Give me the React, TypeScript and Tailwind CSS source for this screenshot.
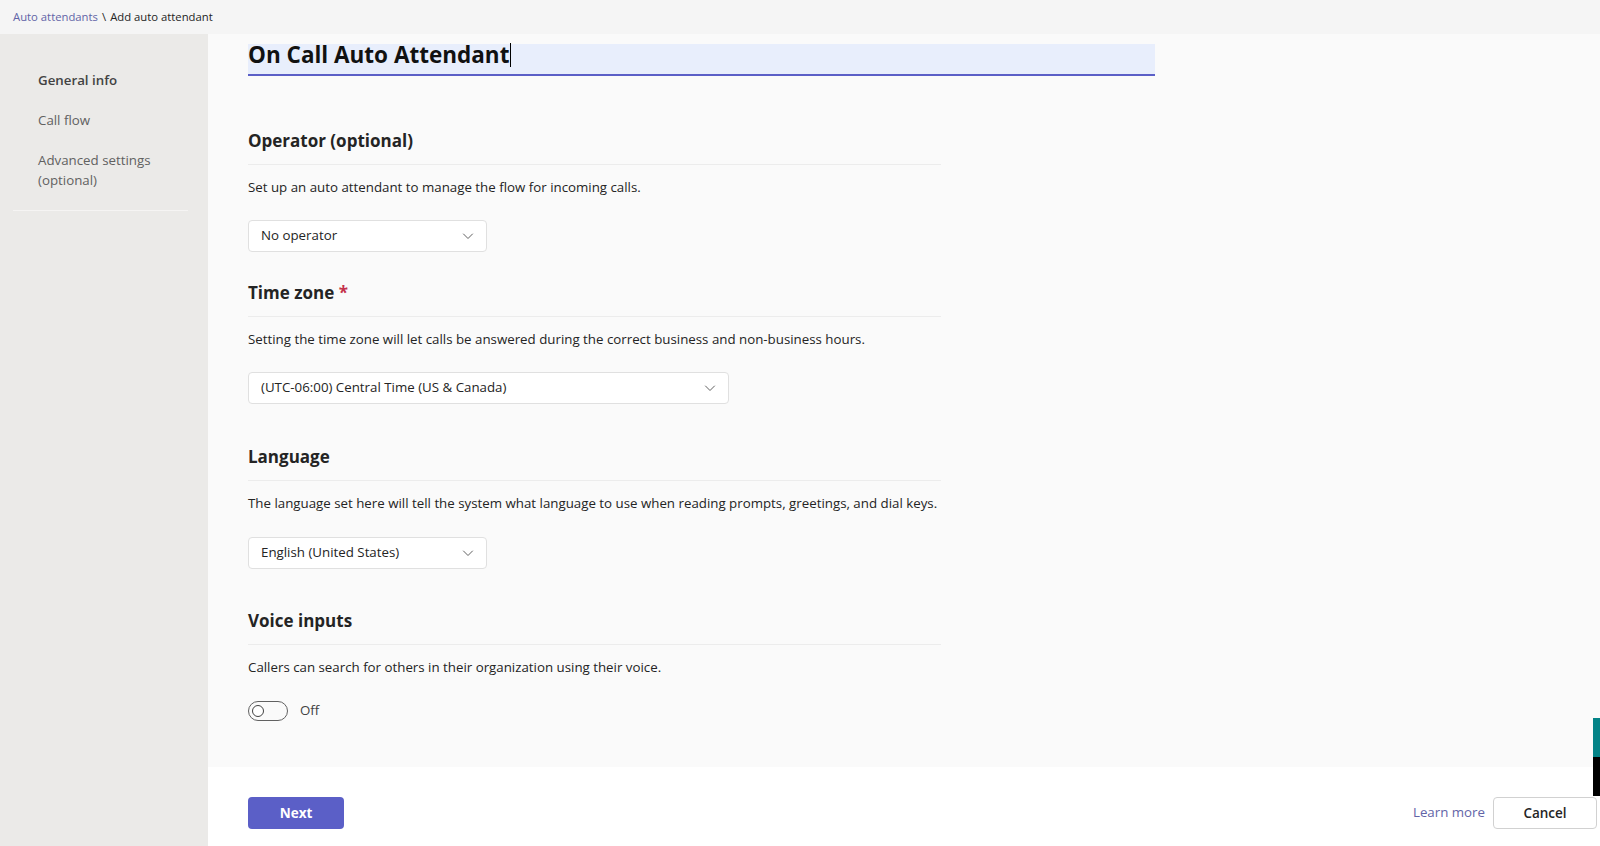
import React, { useState } from "react";

const FONT = { fontFamily: '"Open Sans", "Noto Sans", sans-serif' };

function Chevron() {
  return (
    <svg width="12" height="12" viewBox="0 0 12 12" fill="none" className="text-[#616161]">
      <path d="M1.5 4l4.5 4.5L10.5 4" stroke="currentColor" strokeWidth="1" strokeLinecap="round" strokeLinejoin="round" />
    </svg>
  );
}

function Dropdown({ value, width }: { value: string; width: string }) {
  return (
    <button
      className={`${width} h-[32px] bg-white border border-[#e0e0e0] rounded-[4px] flex items-center justify-between pl-[12px] pr-[12px] text-[13.3px] text-[#242424]`}
    >
      <span>{value}</span>
      <Chevron />
    </button>
  );
}

function Section({
  title,
  required,
  desc,
  children,
  className,
}: {
  title: string;
  required?: boolean;
  desc: string;
  children: React.ReactNode;
  className: string;
}) {
  return (
    <section className={className}>
      <h2 className="text-[17px] leading-[24px] font-bold text-[#242424] w-[693px] pb-[11px] border-b border-[#ececec]">
        {title}
        {required && <span className="text-[#c4314b]"> *</span>}
      </h2>
      <p className="mt-[12px] text-[13.3px] leading-[20px] text-[#242424]">{desc}</p>
      {children}
    </section>
  );
}

export default function App() {
  const [voice, setVoice] = useState(false);

  return (
    <div className="h-screen flex flex-col relative overflow-hidden bg-white" style={FONT}>
      {/* Breadcrumb */}
      <div className="h-[34px] shrink-0 bg-[#f5f5f5] flex items-center pl-[13px] text-[11.3px] text-[#242424]">
        <a className="text-[#6264a7]">Auto attendants</a>
        <span className="mx-[4px]">\</span>
        <span>Add auto attendant</span>
      </div>

      <div className="flex flex-1 min-h-0">
        {/* Sidebar */}
        <aside className="w-[208px] shrink-0 bg-[#ebeae8] pt-[26px] px-[13px]">
          <nav className="w-[175px] pb-[10px] border-b border-[#f5f4f3] text-[13.3px] leading-[20px]">
            <div className="pl-[25px] py-[10px] font-semibold text-[#424242]">General info</div>
            <div className="pl-[25px] py-[10px] text-[#616161]">Call flow</div>
            <div className="pl-[25px] py-[10px] text-[#616161]">
              Advanced settings
              <br />
              (optional)
            </div>
          </nav>
        </aside>

        {/* Main */}
        <main className="flex-1 flex flex-col min-w-0">
          <div className="flex-1 bg-[#fafafa] pl-[40px] pt-[10px]">
            <div className="w-[907px] h-[32px] bg-[#e8eefc] border-b-2 border-[#5b5fc7] flex items-start">
              <span className="text-[22.5px] leading-[22px] font-bold text-[#111]">On Call Auto Attendant</span>
              <span className="w-px h-[24px] bg-black ml-px -mt-[1px]" />
            </div>

            <Section
              className="mt-[53px]"
              title="Operator (optional)"
              desc="Set up an auto attendant to manage the flow for incoming calls."
            >
              <div className="mt-[23px]">
                <Dropdown value="No operator" width="w-[239px]" />
              </div>
            </Section>

            <Section
              className="mt-[29px]"
              title="Time zone"
              required
              desc="Setting the time zone will let calls be answered during the correct business and non-business hours."
            >
              <div className="mt-[23px]">
                <Dropdown value="(UTC-06:00) Central Time (US & Canada)" width="w-[481px]" />
              </div>
            </Section>

            <Section
              className="mt-[41px]"
              title="Language"
              desc="The language set here will tell the system what language to use when reading prompts, greetings, and dial keys."
            >
              <div className="mt-[24px]">
                <Dropdown value="English (United States)" width="w-[239px]" />
              </div>
            </Section>

            <Section
              className="mt-[40px]"
              title="Voice inputs"
              desc="Callers can search for others in their organization using their voice."
            >
              <div className="mt-[24px] flex items-center gap-[12px]">
                <button
                  onClick={() => setVoice(!voice)}
                  className={`w-[40px] h-[20px] rounded-full border border-[#616161] flex items-center px-[3px] ${
                    voice ? "justify-end bg-[#5b5fc7]" : "justify-start bg-transparent"
                  }`}
                >
                  <span className="w-[12px] h-[12px] rounded-full border border-[#424242] bg-white" />
                </button>
                <span className="text-[13.3px] text-[#424242]">{voice ? "On" : "Off"}</span>
              </div>
            </Section>
          </div>

          {/* Footer */}
          <footer className="h-[79px] shrink-0 bg-white flex items-start justify-between pl-[40px] pr-[3px] pt-[30px]">
            <button className="w-[96px] h-[32px] rounded-[4px] bg-[#5b5fc7] text-white text-[13.5px] font-bold">
              Next
            </button>
            <div className="flex items-center gap-[8px]">
              <a className="text-[13.3px] text-[#6264a7]">Learn more</a>
              <button className="w-[104px] h-[32px] rounded-[4px] bg-white border border-[#d1d1d1] text-[13.5px] font-semibold text-[#242424]">
                Cancel
              </button>
            </div>
          </footer>
        </main>
      </div>

      {/* Right edge overlay */}
      <div className="absolute right-0 top-[718px] w-[7px] flex flex-col">
        <div className="h-[39px] bg-[#038387]" />
        <div className="h-[39px] bg-black" />
      </div>
    </div>
  );
}
